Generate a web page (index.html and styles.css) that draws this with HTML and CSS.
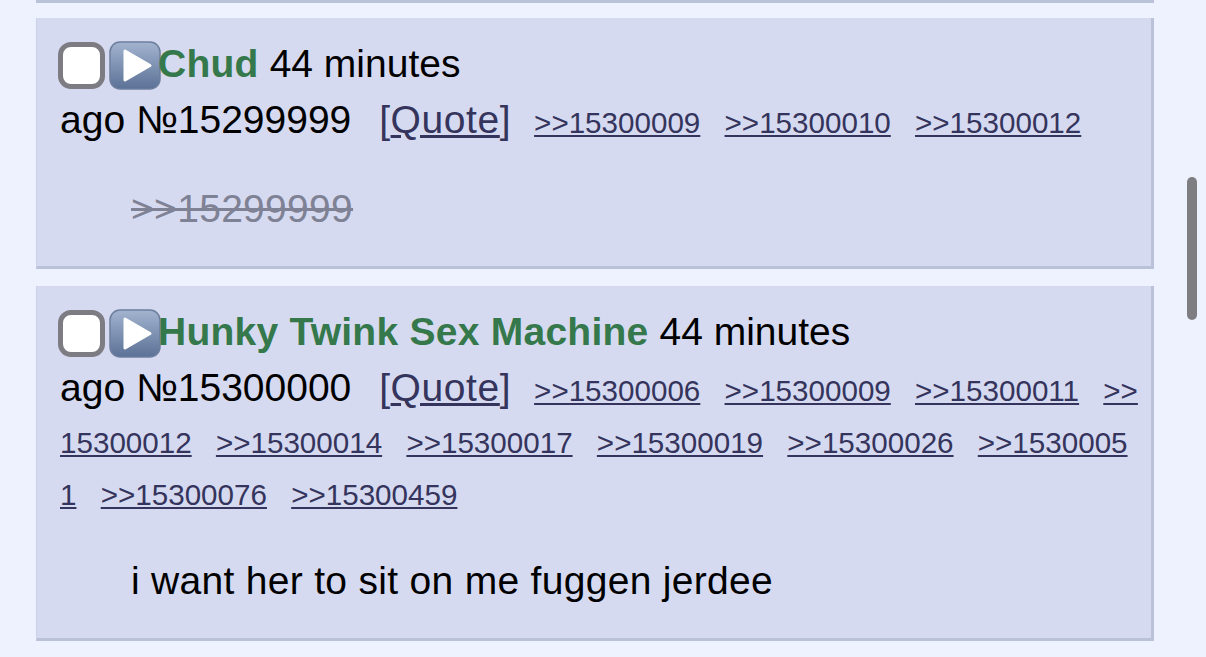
FILE: index.html
```html
<!DOCTYPE html>
<html lang="en">
<head>
  <meta charset="UTF-8" />
  <meta name="viewport" content="width=device-width, initial-scale=1.0"/>
  <title>Thread</title>
  <link rel="stylesheet" href="styles.css">
</head>
<body>
  <div class="thread">
    <!-- tail of the previous reply -->
    <div class="post stub"></div>

    <div class="post" id="p15299999">
      <div class="post-info">
        <div class="name-line">
          <input type="checkbox" class="del-box">
          <span class="play"><svg viewBox="0 0 52 49" width="52" height="49"><defs><linearGradient id="pg1" x1="0" y1="0" x2="0" y2="1"><stop offset="0" stop-color="#a3b4d0"/><stop offset="1" stop-color="#5b7196"/></linearGradient></defs><rect x="1" y="1" width="50" height="47" rx="10" fill="url(#pg1)" stroke="#6d7f9e" stroke-width="1.5"/><path d="M16 10 L41 24.5 L16 39 Z" fill="#fff" stroke="#fff" stroke-width="3" stroke-linejoin="round"/></svg></span>
          <span class="name">Chud</span>
          <span class="date">44 minutes</span>
        </div>
        <div class="meta-line">
          <span>ago</span> <span class="post-num">№15299999</span> <span class="quote">[<a href="#">Quote</a>]</span>
          <span class="backlinks">
            <a href="#">&gt;&gt;15300009</a>
            <a href="#">&gt;&gt;15300010</a>
            <a href="#">&gt;&gt;15300012</a>
          </span>
        </div>
      </div>
      <blockquote class="post-body"><span class="deadlink">&gt;&gt;15299999</span></blockquote>
    </div>

    <div class="post" id="p15300000">
      <div class="post-info">
        <div class="name-line">
          <input type="checkbox" class="del-box">
          <span class="play"><svg viewBox="0 0 52 49" width="52" height="49"><defs><linearGradient id="pg2" x1="0" y1="0" x2="0" y2="1"><stop offset="0" stop-color="#a3b4d0"/><stop offset="1" stop-color="#5b7196"/></linearGradient></defs><rect x="1" y="1" width="50" height="47" rx="10" fill="url(#pg2)" stroke="#6d7f9e" stroke-width="1.5"/><path d="M16 10 L41 24.5 L16 39 Z" fill="#fff" stroke="#fff" stroke-width="3" stroke-linejoin="round"/></svg></span>
          <span class="name">Hunky Twink Sex Machine</span>
          <span class="date">44 minutes</span>
        </div>
        <div class="meta-line">
          <span>ago</span> <span class="post-num">№15300000</span> <span class="quote">[<a href="#">Quote</a>]</span>
          <span class="backlinks">
            <a href="#">&gt;&gt;15300006</a>
            <a href="#">&gt;&gt;15300009</a>
            <a href="#">&gt;&gt;15300011</a>
            <a href="#">&gt;&gt;15300012</a>
            <a href="#">&gt;&gt;15300014</a>
            <a href="#">&gt;&gt;15300017</a>
            <a href="#">&gt;&gt;15300019</a>
            <a href="#">&gt;&gt;15300026</a>
            <a href="#">&gt;&gt;15300051</a>
            <a href="#">&gt;&gt;15300076</a>
            <a href="#">&gt;&gt;15300459</a>
          </span>
        </div>
      </div>
      <blockquote class="post-body">i want her to sit on me fuggen jerdee</blockquote>
    </div>

    <div class="post next"></div>
  </div>

  <div class="scrollbar"></div>
</body>
</html>
```

FILE: styles.css
```css
/* Colores Yotsuba B */
:root {
  --bg-page: #eef2ff;
  --bg-post: #d6daf0;
  --post-border: #b9c2d8;
  --text: #000000;
  --link: #34345c;
  --name: #34784b;
  --dead: #7f8194;
}
* { box-sizing: border-box; margin: 0; padding: 0; }
html, body {
  background: var(--bg-page);
  height: 100%;
  overflow: hidden;
}
body {
  color: var(--text);
  font-family: "Liberation Sans", Arial, sans-serif;
  font-size: 39px;
  padding-left: 36px;
}

/* POSTS */
.thread {
  width: 1118px;
}
.post {
  background: var(--bg-post);
  border-right: 3px solid var(--post-border);
  border-bottom: 3px solid var(--post-border);
  border-left: 1px solid #cdd2ea;
  padding: 15px 11px 32px 23px;
  margin-bottom: 17px;
  word-break: break-all;
}
.post.stub {
  height: 3px;
  padding: 0;
  border-left: none;
  border-right: none;
  background: none;
  margin-bottom: 15px;
}
.post.next {
  width: 1094px;
  height: 40px;
  border-top: 1px solid #e4e7f6;
}

/* CABECERA DEL POST */
.name-line {
  display: flex;
  align-items: center;
  height: 61px;
  line-height: 52px;
  white-space: nowrap;
}
.del-box {
  appearance: none;
  -webkit-appearance: none;
  width: 47px;
  height: 47px;
  margin: 4px 0 0 -2px;
  background: #ffffff;
  border: 5px solid #7c7c82;
  border-radius: 13px;
  flex: none;
}
.play {
  display: block;
  width: 52px;
  height: 49px;
  margin: 4px -3px 0 4px;
  flex: none;
}
.play svg { display: block; }
.name {
  color: var(--name);
  font-weight: bold;
  letter-spacing: 0.25px;
}
.date {
  margin-left: 11px;
}

.meta-line {
  line-height: 52px;
}
.post-num {
  margin-right: 17px;
}
.quote {
  color: var(--link);
  margin-right: 12px;
  letter-spacing: 0.6px;
}
.quote a {
  color: var(--link);
}
.backlinks {
  font-size: 29.6px;
  line-height: 40px;
}
.backlinks a {
  color: var(--link);
  margin-right: 16px;
}

/* CUERPO */
.post-body {
  margin: 37px 0 0 71px;
  line-height: 51px;
  letter-spacing: 0.3px;
}
.deadlink {
  color: var(--dead);
  text-decoration: line-through;
}

/* Barra de scroll superpuesta */
.scrollbar {
  position: fixed;
  left: 1187px;
  top: 177px;
  width: 10px;
  height: 143px;
  border-radius: 5px;
  background: #7e7e82;
}
```
